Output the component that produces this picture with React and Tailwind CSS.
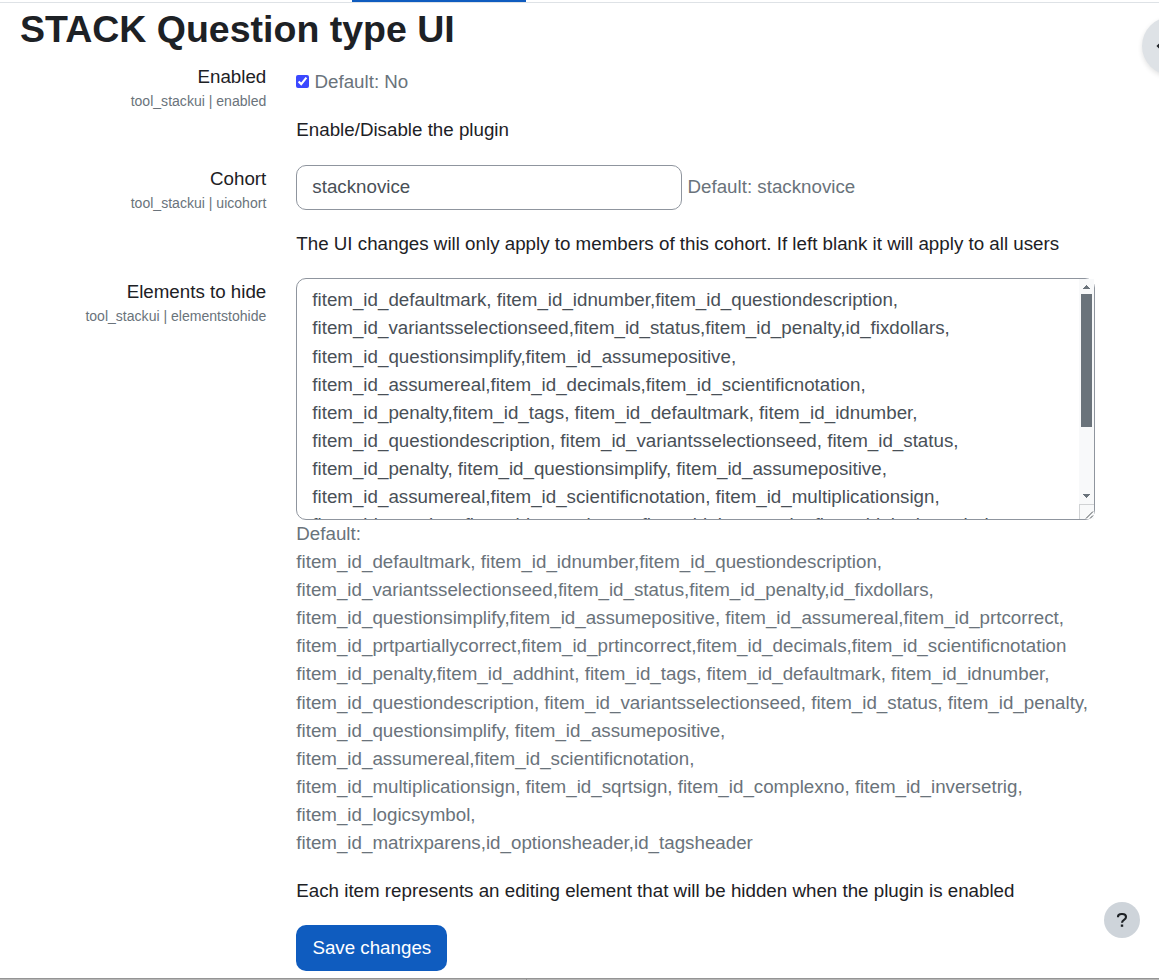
import { useState } from "react";

const hiddenElements = `fitem_id_defaultmark, fitem_id_idnumber,fitem_id_questiondescription,
fitem_id_variantsselectionseed,fitem_id_status,fitem_id_penalty,id_fixdollars,
fitem_id_questionsimplify,fitem_id_assumepositive,
fitem_id_assumereal,fitem_id_decimals,fitem_id_scientificnotation,
fitem_id_penalty,fitem_id_tags, fitem_id_defaultmark, fitem_id_idnumber,
fitem_id_questiondescription, fitem_id_variantsselectionseed, fitem_id_status,
fitem_id_penalty, fitem_id_questionsimplify, fitem_id_assumepositive,
fitem_id_assumereal,fitem_id_scientificnotation, fitem_id_multiplicationsign,
fitem_id_sqrtsign, fitem_id_complexno, fitem_id_inversetrig, fitem_id_logicsymbol,`;

const defaultElements = `Default:
fitem_id_defaultmark, fitem_id_idnumber,fitem_id_questiondescription,
fitem_id_variantsselectionseed,fitem_id_status,fitem_id_penalty,id_fixdollars,
fitem_id_questionsimplify,fitem_id_assumepositive, fitem_id_assumereal,fitem_id_prtcorrect,
fitem_id_prtpartiallycorrect,fitem_id_prtincorrect,fitem_id_decimals,fitem_id_scientificnotation
fitem_id_penalty,fitem_id_addhint, fitem_id_tags, fitem_id_defaultmark, fitem_id_idnumber,
fitem_id_questiondescription, fitem_id_variantsselectionseed, fitem_id_status, fitem_id_penalty,
fitem_id_questionsimplify, fitem_id_assumepositive,
fitem_id_assumereal,fitem_id_scientificnotation,
fitem_id_multiplicationsign, fitem_id_sqrtsign, fitem_id_complexno, fitem_id_inversetrig,
fitem_id_logicsymbol,
fitem_id_matrixparens,id_optionsheader,id_tagsheader`;

function Setting({ label, name, className, children }) {
  return (
    <div className={`flex ${className}`}>
      <div className="w-[266.3px] shrink-0 text-right">
        <div>{label}</div>
        <div className="text-[14.0625px] leading-[21px] text-[#6a737b]">{name}</div>
      </div>
      <div className="ml-[30px] w-[799px]">{children}</div>
    </div>
  );
}

function Scrollbar() {
  return (
    <div className="absolute top-px right-px bottom-px flex w-[15px] flex-col">
      <div className="flex h-[14px] items-center justify-center bg-[#f8f9fa] pt-[2px]">
        <svg width="7" height="4" viewBox="0 0 7 4" shapeRendering="crispEdges" fill="#6a737b">
          <path d="M3 0h1v1h1v1h1v1h1v1H0V3h1V2h1V1h1z" />
        </svg>
      </div>
      <div className="flex-1 bg-[#f8f9fa] px-[2px] pt-px">
        <div className="h-[133px] bg-[#6a737b]" />
      </div>
      <div className="flex h-[14px] items-center justify-center bg-[#f8f9fa] pb-[2px]">
        <svg width="7" height="4" viewBox="0 0 7 4" shapeRendering="crispEdges" fill="#6a737b">
          <path d="M0 0h7v1H6v1H5v1H4v1H3V3H2V2H1V1H0z" />
        </svg>
      </div>
      <div className="h-[15px] border-t border-l border-[#d0d2d4] bg-[#f8f9fa]">
        <svg width="14" height="14" viewBox="0 0 14 14" stroke="#4b5055" strokeWidth="1" fill="none">
          <path d="M6 13.5l7-7M10 13.5l3-3" />
        </svg>
      </div>
    </div>
  );
}

export default function App() {
  const [enabled, setEnabled] = useState(true);
  return (
    <div className="relative flex h-[980px] w-[1159px] flex-col overflow-hidden bg-white font-['Liberation_Sans',Arial,sans-serif] text-[18.75px] leading-[28.125px] text-[#1d2125]">
      <div className="h-[3px] shrink-0 border-b border-[#dee2e6]">
        <div className="ml-[352px] h-[2px] w-[174px] bg-[#0f5cbf]" />
      </div>
      <h1 className="mt-[4px] ml-[20px] h-[45px] text-[37.5px] leading-[45px] font-bold">STACK Question type UI</h1>

      <Setting label="Enabled" name="tool_stackui | enabled" className="mt-[11px]">
        <label className="mt-[5px] flex h-[28px] items-center text-[#6a737b]">
          <input
            type="checkbox"
            checked={enabled}
            onChange={(e) => setEnabled(e.target.checked)}
            className="mr-[5.2px] mb-[2px] size-[13px] accent-[#3b48ff]"
          />
          Default: No
        </label>
        <p className="mt-[20px]">Enable/Disable the plugin</p>
      </Setting>

      <Setting label="Cohort" name="tool_stackui | uicohort" className="mt-[21px]">
        <div className="flex h-[45px] items-center text-[#6a737b]">
          <input
            defaultValue="stacknovice"
            className="mr-[5.2px] h-[45px] w-[386px] rounded-[10px] border border-[#8f959e] px-[15px] pb-[2px] text-[#495057]"
          />
          <span className="-mt-[2px]">Default: stacknovice</span>
        </div>
        <p className="mt-[20px] whitespace-nowrap">
          The UI changes will only apply to members of this cohort. If left blank it will apply to all users
        </p>
      </Setting>

      <Setting label="Elements to hide" name="tool_stackui | elementstohide" className="mt-[20px]">
        <div className="relative h-[241.6px]">
          <textarea
            defaultValue={hiddenElements}
            className="block h-[242px] w-full resize-none overflow-hidden rounded-[10px] border border-[#8f959e] px-[15px] py-[7px] whitespace-pre text-[#495057]"
          />
          <Scrollbar />
        </div>
        <div className="whitespace-pre text-[#6a737b]">{defaultElements}</div>
        <p className="mt-[19.4px]">Each item represents an editing element that will be hidden when the plugin is enabled</p>
        <button className="mt-[20px] block h-[46px] w-[151px] rounded-[10px] bg-[#0f5cbf] pt-[1px] text-white">
          Save changes
        </button>
      </Setting>

      <div className="absolute top-[17px] left-[1142px] flex size-[58px] items-center rounded-full bg-[#dee2e6] pb-px pl-[14px] shadow-[0_2px_5px_rgba(0,0,0,0.12)]">
        <svg width="12" height="12" viewBox="0 0 12 12" fill="none" stroke="#1d2125" strokeWidth="2.2">
          <path d="M7 1L2 6l5 5" />
        </svg>
      </div>
      <button className="absolute top-[902px] left-[1104px] flex size-[36px] items-center justify-center rounded-full bg-[#ced4da]">
        <svg width="12" height="16" viewBox="0 0 12 16" fill="none" stroke="#1d2125" strokeWidth="2.1">
          <path d="M2 5.2V4.7C2 3 3.3 2 5.6 2h.7C8.600 2 10 3.200 10 5c0 1.400-.8 2.200-2 2.900C6.700 8.700 6 9.200 6 10.700" />
          <path d="M6 12.500v2.300" strokeWidth="2.400" />
        </svg>
      </button>
      <div className="absolute inset-x-0 bottom-0 flex h-[2px] border-t border-[#949494] bg-[#b6b6b6]">
        <div className="ml-[526px] w-px bg-[#949494]" />
      </div>
    </div>
  );
}
